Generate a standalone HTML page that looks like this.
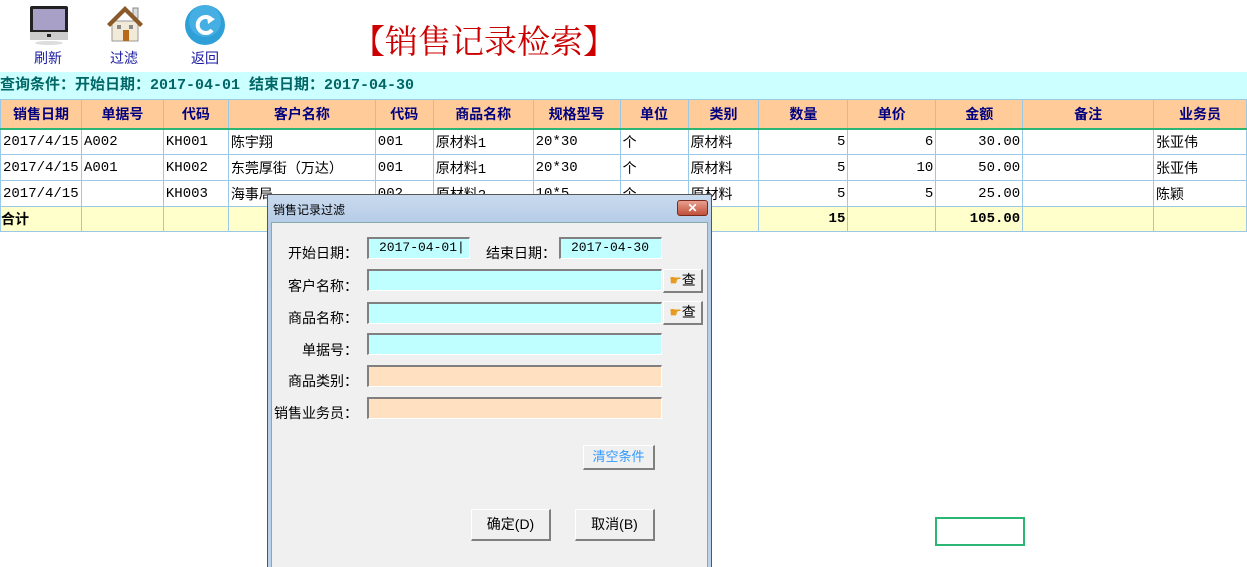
<!DOCTYPE html>
<html style="width:1247px;height:567px;overflow:hidden"><head><meta charset="utf-8"><style>
*{margin:0;padding:0;box-sizing:border-box}
body{width:1247px;height:567px;background:#fff;position:relative;overflow:hidden;font-family:"Liberation Sans","Noto Sans CJK SC",sans-serif}
.a{position:absolute}
.tb{font-size:14px;color:#1a1aa0;text-align:center;width:60px}
table{position:absolute;left:0;top:99px;border-collapse:collapse;table-layout:fixed;font-family:"Liberation Mono","Noto Sans CJK SC",monospace;font-size:14px}
td{border:1px solid #9cc8e8;height:26px;padding:0 2px;white-space:nowrap;overflow:hidden}
tr.h td{background:#ffcc99;color:#000080;font-weight:bold;text-align:center;font-family:"Liberation Sans","Noto Sans CJK SC",sans-serif;height:29px;border-bottom:2px solid #2bb673}
tr.t td{background:#ffffcc;font-weight:bold;height:25px}
.r{text-align:right}
.dlg{font-size:13px;color:#000}
.in{position:absolute;border-top:2px solid #808080;border-left:2px solid #808080;border-bottom:1px solid #fff;border-right:1px solid #fff;font-family:"Liberation Mono",monospace;font-size:13px;padding-left:10px;line-height:18px}
.lb{position:absolute;text-align:right;width:110px;left:248px;font-size:14px}
.btn{position:absolute;background:#f0f0f0;border-top:1px solid #fff;border-left:1px solid #fff;border-right:2px solid #808080;border-bottom:2px solid #808080;text-align:center;font-size:14px}
</style></head><body>
<svg class="a" style="left:28px;top:5px" width="44" height="40"><rect x="2" y="1" width="38" height="28" rx="2" fill="#222"/><rect x="5" y="4" width="32" height="21" fill="#a9a0c8"/><rect x="2" y="27" width="38" height="8" fill="#ccc"/><rect x="19" y="29" width="4" height="3" fill="#222"/><ellipse cx="21" cy="38" rx="14" ry="2" fill="#ddd"/></svg>
<svg class="a" style="left:104px;top:3px" width="42" height="42"><rect x="29" y="5" width="5" height="10" fill="#ddd" stroke="#888"/><rect x="8" y="18" width="26" height="20" fill="#f2ead8" stroke="#999"/><polygon points="3,21 21,3 39,21 36,24 21,9 6,24" fill="#8b5a2b"/><rect x="13" y="22" width="4" height="4" fill="#888"/><rect x="25" y="22" width="4" height="4" fill="#888"/><rect x="19" y="27" width="6" height="11" fill="#b86a1a"/></svg>
<svg class="a" style="left:185px;top:5px" width="42" height="42"><circle cx="20" cy="20" r="20" fill="#2f9fd8"/><circle cx="20" cy="16" r="16" fill="#5cc0ee" opacity=".5"/><path d="M26 14 A8 8 0 1 0 27 25" stroke="#fff" stroke-width="4" fill="none"/><polygon points="22,10 30,14 23,19" fill="#fff"/></svg>
<div class="a tb" style="left:18px;top:48px">刷新</div>
<div class="a tb" style="left:94px;top:48px">过滤</div>
<div class="a tb" style="left:175px;top:48px">返回</div>
<div class="a" style="left:352px;top:16px;font-size:33px;color:#cc0000;font-family:'Noto Serif CJK SC','Noto Sans CJK SC',serif">【销售记录检索】</div>
<div class="a" style="left:0;top:72px;width:1247px;height:27px;background:#ccffff;color:#006666;font-weight:bold;font-size:15px;line-height:28px;font-family:'Liberation Mono','Noto Sans CJK SC',monospace">查询条件：开始日期：2017-04-01 结束日期：2017-04-30</div>
<table>
<colgroup><col style="width:81px"><col style="width:82px"><col style="width:65px"><col style="width:147px"><col style="width:58px"><col style="width:100px"><col style="width:87px"><col style="width:68px"><col style="width:71px"><col style="width:89px"><col style="width:88px"><col style="width:87px"><col style="width:131px"><col style="width:93px"></colgroup>
<tr class="h"><td>销售日期</td><td>单据号</td><td>代码</td><td>客户名称</td><td>代码</td><td>商品名称</td><td>规格型号</td><td>单位</td><td>类别</td><td>数量</td><td>单价</td><td>金额</td><td>备注</td><td>业务员</td></tr>
<tr><td>2017/4/15</td><td>A002</td><td>KH001</td><td>陈宇翔</td><td>001</td><td>原材料1</td><td>20*30</td><td>个</td><td>原材料</td><td class="r">5</td><td class="r">6</td><td class="r">30.00</td><td></td><td>张亚伟</td></tr>
<tr><td>2017/4/15</td><td>A001</td><td>KH002</td><td>东莞厚街（万达）</td><td>001</td><td>原材料1</td><td>20*30</td><td>个</td><td>原材料</td><td class="r">5</td><td class="r">10</td><td class="r">50.00</td><td></td><td>张亚伟</td></tr>
<tr><td>2017/4/15</td><td></td><td>KH003</td><td>海事局</td><td>002</td><td>原材料2</td><td>10*5</td><td>个</td><td>原材料</td><td class="r">5</td><td class="r">5</td><td class="r">25.00</td><td></td><td>陈颖</td></tr>
<tr class="t"><td style="padding:0">合计</td><td></td><td></td><td></td><td></td><td></td><td></td><td></td><td></td><td class="r">15</td><td></td><td class="r">105.00</td><td></td><td></td></tr>
</table>
<div class="a" style="left:935px;top:517px;width:90px;height:29px;border:2px solid #2bb673"></div>
<div class="a dlg" style="left:267px;top:194px;width:445px;height:373px;border:1px solid #555;border-bottom:none;background:linear-gradient(#c9daee,#b4cbe6 30px,#bcd2ea);overflow:hidden">
 <div class="a" style="left:5px;top:6px;font-size:12px">销售记录过滤</div>
 <div class="a" style="left:409px;top:5px;width:31px;height:16px;border:1px solid #7a2a1a;border-radius:3px;background:linear-gradient(#e8a090,#c0503a);color:#fff;font-weight:bold;text-align:center;font-size:12px;line-height:14px">✕</div>
 <div class="a" style="left:3px;top:27px;width:437px;height:360px;background:#f0f0f0;border:1px solid #8aa"></div>
</div>
<div class="lb" style="top:243px">开始日期：</div>
<div class="in" style="left:367px;top:237px;width:103px;height:22px;background:#c0ffff">2017-04-01|</div>
<div class="a" style="left:486px;top:243px;font-size:14px">结束日期：</div>
<div class="in" style="left:559px;top:237px;width:103px;height:22px;background:#c0ffff">2017-04-30</div>
<div class="lb" style="top:276px">客户名称：</div>
<div class="in" style="left:367px;top:269px;width:295px;height:22px;background:#c0ffff"></div>
<div class="btn" style="left:663px;top:269px;width:40px;height:24px;line-height:20px"><span style="color:#e89a20">☛</span>查</div>
<div class="lb" style="top:308px">商品名称：</div>
<div class="in" style="left:367px;top:302px;width:295px;height:22px;background:#c0ffff"></div>
<div class="btn" style="left:663px;top:301px;width:40px;height:24px;line-height:20px"><span style="color:#e89a20">☛</span>查</div>
<div class="lb" style="top:340px">单据号：</div>
<div class="in" style="left:367px;top:333px;width:295px;height:22px;background:#c0ffff"></div>
<div class="lb" style="top:371px">商品类别：</div>
<div class="in" style="left:367px;top:365px;width:295px;height:22px;background:#ffe0c0"></div>
<div class="lb" style="top:403px">销售业务员：</div>
<div class="in" style="left:367px;top:397px;width:295px;height:22px;background:#ffe0c0"></div>
<div class="btn" style="left:583px;top:445px;width:72px;height:25px;line-height:22px;font-size:13px;color:#3399ff">清空条件</div>
<div class="btn" style="left:471px;top:509px;width:80px;height:32px;line-height:29px">确定(D)</div>
<div class="btn" style="left:575px;top:509px;width:80px;height:32px;line-height:29px">取消(B)</div>
</body></html>
